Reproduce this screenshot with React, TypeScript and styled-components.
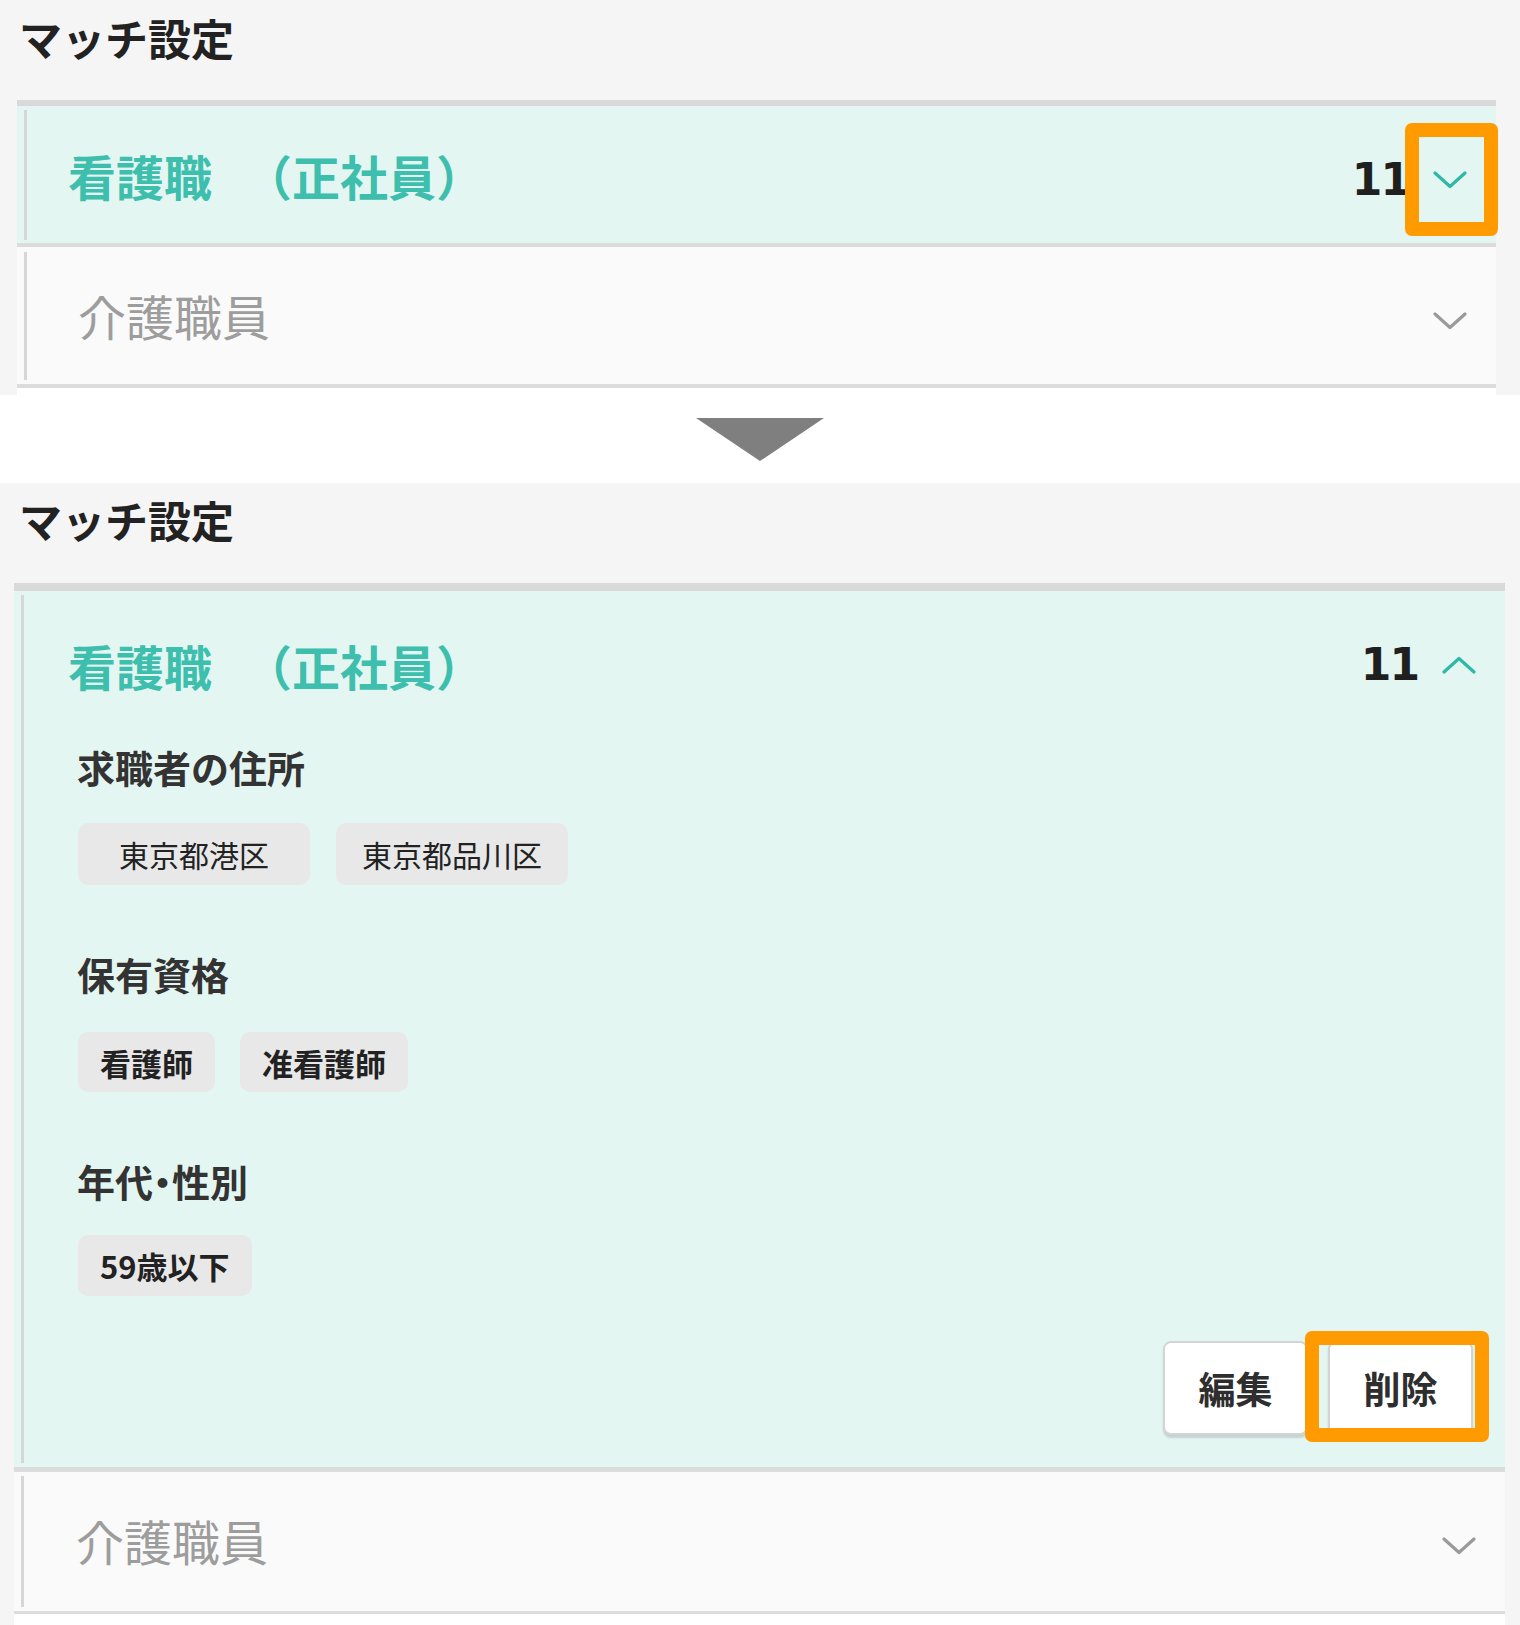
import React from 'react';
import styled, { createGlobalStyle } from 'styled-components';

const GlobalStyle = createGlobalStyle`
  html, body { margin: 0; padding: 0; background: #ffffff; }
  body { font-family: "Noto Sans CJK JP", "Noto Sans", sans-serif; }
  * { box-sizing: border-box; }
`;

const Page = styled.div`
  width: 1520px;
  display: flex;
  flex-direction: column;
`;

const Panel = styled.section<{ $height: number }>`
  height: ${p => p.$height}px;
  background: #f5f5f5;
  display: flex;
  flex-direction: column;
  overflow: hidden;
`;

const Title = styled.h2<{ $padTop: number; $left: number }>`
  margin: 0;
  height: 100px;
  flex: none;
  padding: ${p => p.$padTop}px 0 0 ${p => p.$left}px;
  font-size: 43px;
  line-height: 1;
  font-weight: 700;
  color: #222222;
`;

const Card = styled.div<{ $left: number; $right: number; $top: number }>`
  margin: 0 ${p => p.$right}px 0 ${p => p.$left}px;
  border-top: ${p => p.$top}px solid #d9d9d9;
  display: flex;
  flex-direction: column;
  flex: none;
`;

const Row = styled.div<{ $active?: boolean; $h: number; $divider: number; $padTop: number; $padBottom: number }>`
  height: ${p => p.$h}px;
  background: ${p => (p.$active ? '#e4f6f2' : '#fafafa')};
  border-bottom: ${p => p.$divider}px solid #dcdcdc;
  padding: ${p => p.$padTop}px 0 ${p => p.$padBottom}px 7px;
  flex: none;
`;

const RowInner = styled.div`
  height: 100%;
  border-left: 3px solid #d6d6d6;
  display: flex;
  flex-direction: column;
`;

const Header = styled.div<{ $h: number; $left: number }>`
  height: ${p => p.$h}px;
  flex: none;
  display: flex;
  align-items: center;
  justify-content: space-between;
  padding: 0 29px 0 ${p => p.$left}px;
`;

const HeadTitle = styled.div<{ $active?: boolean; $shift: number }>`
  font-size: 48px;
  line-height: 1;
  font-weight: ${p => (p.$active ? 700 : 400)};
  color: ${p => (p.$active ? '#3ebfae' : '#9d9d9d')};
  transform: translateY(${p => p.$shift}px);
  white-space: nowrap;
`;

const Employment = styled.span`
  margin-left: 32px;
`;

const RightGroup = styled.div<{ $shift: number }>`
  display: flex;
  align-items: center;
  transform: translateY(${p => p.$shift}px);
`;

const Count = styled.span`
  font-family: "DejaVu Sans", "Liberation Sans", sans-serif;
  font-size: 44px;
  font-weight: 700;
  line-height: 1;
  letter-spacing: -2px;
  color: #1f1f1f;
  margin-right: 24px;
`;

const ChevronWrap = styled.span`
  position: relative;
  display: flex;
  width: 34px;
  height: 18px;
`;

const Highlight = styled.span<{ $l: number; $t: number; $w: number; $h: number }>`
  position: absolute;
  left: ${p => p.$l}px;
  top: ${p => p.$t}px;
  width: ${p => p.$w}px;
  height: ${p => p.$h}px;
  border: 14px solid #ff9a00;
  border-radius: 7px;
  pointer-events: none;
`;

const Body = styled.div`
  display: flex;
  flex-direction: column;
  padding: 0 32px 0 54px;
`;

const Label = styled.h3<{ $mt: number }>`
  margin: ${p => p.$mt}px 0 0 -1px;
  font-size: 38px;
  line-height: 1;
  font-weight: 700;
  color: #333333;
`;

const Dot = styled.span`
  font-feature-settings: "halt";
`;

const ChipRow = styled.div<{ $mt: number; $gap: number }>`
  display: flex;
  gap: ${p => p.$gap}px;
  margin-top: ${p => p.$mt}px;
`;

const Chip = styled.span<{ $bold?: boolean; $minW?: number; $h: number }>`
  display: inline-flex;
  align-items: center;
  justify-content: center;
  height: ${p => p.$h}px;
  min-width: ${p => p.$minW ?? 0}px;
  padding: 0 22px;
  background: #e8e8e8;
  border-radius: 10px;
  font-size: ${p => (p.$bold ? 31 : 30)}px;
  font-weight: ${p => (p.$bold ? 700 : 400)};
  line-height: 1;
  color: #222222;
`;

const Actions = styled.div`
  display: flex;
  justify-content: flex-end;
  gap: 20px;
  margin-top: 45px;
`;

const ButtonWrap = styled.span`
  position: relative;
  display: flex;
`;

const ActionButton = styled.button`
  width: 145px;
  height: 94px;
  background: #ffffff;
  border: 2px solid #d4d4d4;
  border-radius: 8px;
  box-shadow: 0 3px 2px rgba(0, 0, 0, 0.14);
  font-family: "Noto Sans CJK JP", sans-serif;
  font-size: 37px;
  font-weight: 700;
  line-height: 1;
  color: #2e2e2e;
  padding: 0;
`;

const Peek = styled.div<{ $h: number }>`
  height: ${p => p.$h}px;
  background: #ffffff;
  flex: none;
`;

const Separator = styled.div`
  height: 88px;
  background: #ffffff;
  display: flex;
  justify-content: center;
  padding-top: 23px;
`;

const Chevron: React.FC<{ up?: boolean; color: string }> = ({ up, color }) => (
  <svg width="34" height="18" viewBox="0 0 34 18">
    <polyline
      points={up ? '2,16 17,2.5 32,16' : '2,2 17,15.5 32,2'}
      fill="none"
      stroke={color}
      strokeWidth="3.2"
      strokeLinecap="round"
      strokeLinejoin="round"
    />
  </svg>
);

const TEAL = '#2fb8a6';
const GRAY = '#9a9a9a';

export default function App() {
  return (
    <>
      <GlobalStyle />
      <Page>
        <Panel $height={395}>
          <Title $padTop={16} $left={19}>マッチ設定</Title>
          <Card $left={17} $right={24} $top={6}>
            <Row $active $h={141} $divider={4} $padTop={4} $padBottom={3}>
              <RowInner>
                <Header $h={130} $left={41}>
                  <HeadTitle $active $shift={0}>
                    看護職<Employment>（正社員）</Employment>
                  </HeadTitle>
                  <RightGroup $shift={5}>
                    <Count>11</Count>
                    <ChevronWrap>
                      <Chevron color={TEAL} />
                      <Highlight $l={-28} $t={-48} $w={93} $h={113} />
                    </ChevronWrap>
                  </RightGroup>
                </Header>
              </RowInner>
            </Row>
            <Row $h={141} $divider={4} $padTop={5} $padBottom={4}>
              <RowInner>
                <Header $h={128} $left={51}>
                  <HeadTitle $shift={-1}>介護職員</HeadTitle>
                  <RightGroup $shift={5}>
                    <ChevronWrap>
                      <Chevron color={GRAY} />
                    </ChevronWrap>
                  </RightGroup>
                </Header>
              </RowInner>
            </Row>
            <Peek $h={7} />
          </Card>
        </Panel>

        <Separator>
          <svg width="128" height="43" viewBox="0 0 128 43">
            <polygon points="0,0 128,0 64,43" fill="#7f7f7f" />
          </svg>
        </Separator>

        <Panel $height={1142}>
          <Title $padTop={15} $left={19}>マッチ設定</Title>
          <Card $left={14} $right={15} $top={8}>
            <Row $active $h={881} $divider={5} $padTop={4} $padBottom={4}>
              <RowInner>
                <Header $h={140} $left={44}>
                  <HeadTitle $active $shift={0}>
                    看護職<Employment>（正社員）</Employment>
                  </HeadTitle>
                  <RightGroup $shift={0}>
                    <Count>11</Count>
                    <ChevronWrap>
                      <Chevron up color={TEAL} />
                    </ChevronWrap>
                  </RightGroup>
                </Header>
                <Body>
                  <Label $mt={13}>求職者の住所</Label>
                  <ChipRow $mt={37} $gap={26}>
                    <Chip $h={62} $minW={232}>東京都港区</Chip>
                    <Chip $h={62} $minW={232}>東京都品川区</Chip>
                  </ChipRow>
                  <Label $mt={70}>保有資格</Label>
                  <ChipRow $mt={39} $gap={25}>
                    <Chip $h={60} $bold>看護師</Chip>
                    <Chip $h={60} $bold>准看護師</Chip>
                  </ChipRow>
                  <Label $mt={70}>年代<Dot>・</Dot>性別</Label>
                  <ChipRow $mt={35} $gap={25}>
                    <Chip $h={61} $bold>59歳以下</Chip>
                  </ChipRow>
                  <Actions>
                    <ButtonWrap>
                      <ActionButton>編集</ActionButton>
                    </ButtonWrap>
                    <ButtonWrap>
                      <ActionButton>削除</ActionButton>
                      <Highlight $l={-23} $t={-10} $w={184} $h={111} />
                    </ButtonWrap>
                  </Actions>
                </Body>
              </RowInner>
            </Row>
            <Row $h={142} $divider={3} $padTop={4} $padBottom={4}>
              <RowInner>
                <Header $h={131} $left={52}>
                  <HeadTitle $shift={-2}>介護職員</HeadTitle>
                  <RightGroup $shift={4}>
                    <ChevronWrap>
                      <Chevron color={GRAY} />
                    </ChevronWrap>
                  </RightGroup>
                </Header>
              </RowInner>
            </Row>
            <Peek $h={11} />
          </Card>
        </Panel>
      </Page>
    </>
  );
}
